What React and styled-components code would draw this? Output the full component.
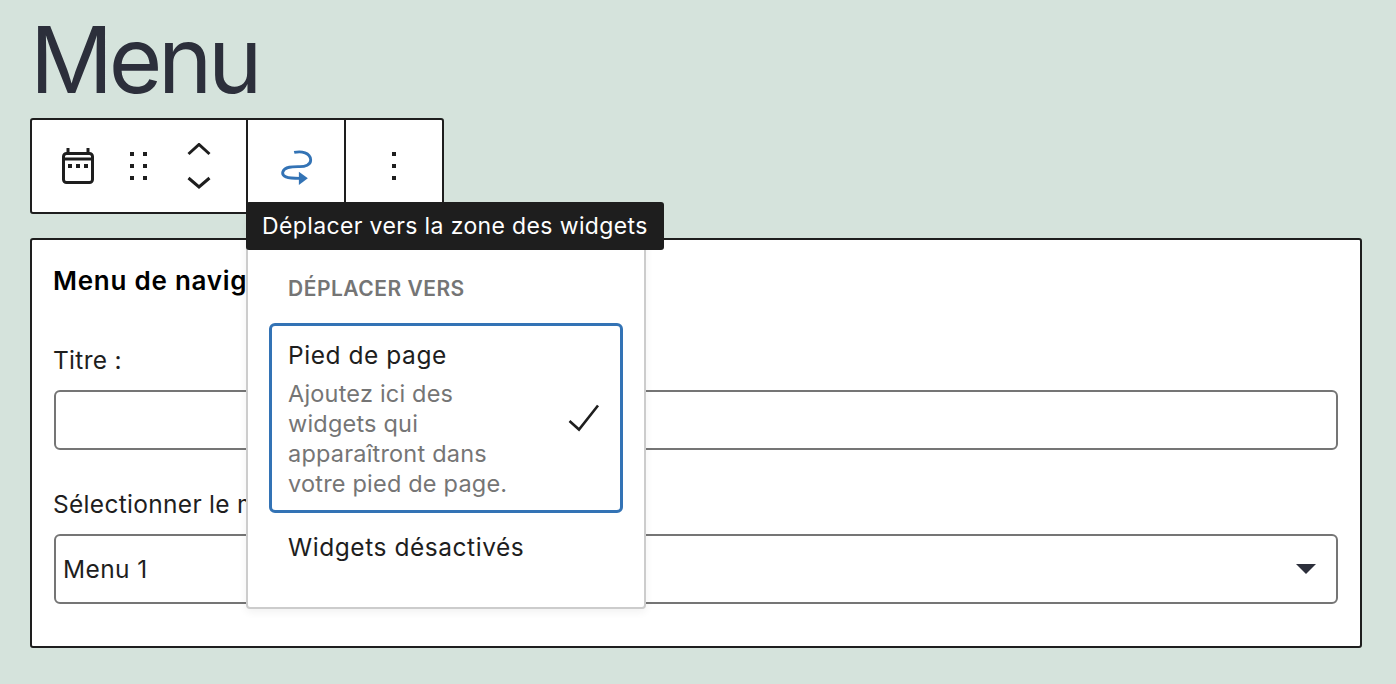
import React from 'react'
import styled, { createGlobalStyle } from 'styled-components'

const Global = createGlobalStyle`
  html, body {
    margin: 0;
    height: 100%;
    background: #d5e3dc;
  }
  body {
    font-family: Inter, "Noto Sans", sans-serif;
    color: #1e1e1e;
    overflow: hidden;
  }
`

const Page = styled.main`
  width: 1396px;
  height: 684px;
  box-sizing: border-box;
  padding: 0 34px 0 30px;
`

const Title = styled.h1`
  margin: 0;
  height: 118px;
  padding: 10px 0 0 0;
  box-sizing: border-box;
  font-size: 92px;
  line-height: 100px;
  font-weight: 400;
  letter-spacing: -4.4px;
  color: #2c2f3b;
`

//toolbar + the popover hanging from it
const ToolArea = styled.div`
  position: relative;
  z-index: 2;
`

const Toolbar = styled.div`
  display: flex;
  width: 414px;
  height: 96px;
  box-sizing: border-box;
  background: #fff;
  border: 2px solid #1e1e1e;
  border-radius: 3px;
`

const ToolGroup = styled.div`
  width: ${p => p.$width}px;
  flex: none;
  border-right: ${p => (p.$last ? 'none' : '2px solid #1e1e1e')};
  box-sizing: border-box;
  svg {
    display: block;
  }
`

const GroupInner = styled.div`
  display: flex;
  align-items: center;
  height: 100%;
  justify-content: ${p => (p.$center ? 'center' : 'flex-start')};
  padding-left: ${p => p.$pad || 0}px;
  gap: ${p => p.$gap || 0}px;
`

const MoverSlot = styled.span`
  margin-left: 4px;
`

const RedirectSlot = styled.span`
  margin: 4px 0 0 1px;
`

const Tooltip = styled.div`
  position: absolute;
  z-index: 3;
  left: 216px;
  top: 84px;
  height: 48px;
  width: 418px;
  box-sizing: border-box;
  background: #1e1e1e;
  color: #fff;
  border-radius: 3px;
  font-size: 23px;
  letter-spacing: 0.37px;
  line-height: 48px;
  padding-left: 16px;
  white-space: nowrap;
`

const Popover = styled.div`
  position: absolute;
  z-index: 2;
  left: 216px;
  top: 96px;
  width: 400px;
  height: 395px;
  box-sizing: border-box;
  background: #fff;
  border: 2px solid #cccccc;
  border-radius: 4px;
  box-shadow: 0 3px 8px rgba(0, 0, 0, 0.06);
  padding: 59px 21px 0;
`

const PopoverHeading = styled.div`
  font-size: 21px;
  line-height: 28px;
  font-weight: 600;
  letter-spacing: 0.5px;
  color: #757575;
  padding-left: 19px;
  height: 48px;
`

const Option = styled.div`
  display: flex;
  align-items: center;
  justify-content: space-between;
  box-sizing: border-box;
  width: 354px;
  border: 3px solid ${p => (p.$selected ? '#3373b5' : 'transparent')};
  border-radius: 6px;
  padding: ${p => (p.$selected ? '13px 20px 11px 16px' : '15px 16px')};
`

const OptionLabel = styled.div`
  font-size: 24.5px;
  line-height: 32px;
  color: #1e1e1e;
  letter-spacing: 0.55px;
`

const OptionHint = styled.div`
  margin-top: 8px;
  font-size: 23.5px;
  line-height: 30px;
  letter-spacing: 0.2px;
  color: #757575;
  width: 240px;
`

const Panel = styled.section`
  margin-top: 24px;
  height: 410px;
  box-sizing: border-box;
  background: #fff;
  border: 2px solid #1e1e1e;
  border-radius: 3px;
  padding: 24px 22px 0 21px;
`

const PanelTitle = styled.h2`
  margin: 0 0 47px;
  font-size: 26px;
  line-height: 34px;
  font-weight: 560;
  letter-spacing: 0.75px;
  color: #000;
`

const FieldLabel = styled.label`
  display: block;
  font-size: 24.5px;
  line-height: 30px;
  letter-spacing: 0.3px;
  color: #1e1e1e;
  margin-bottom: 15px;
`

const TextInput = styled.input`
  display: block;
  width: calc(100% - 1px);
  margin-left: 1px;
  height: 60px;
  box-sizing: border-box;
  border: 2px solid #757575;
  border-radius: 6px;
  background: #fff;
  margin-bottom: 39px;
`

const SelectBox = styled.div`
  display: flex;
  align-items: center;
  justify-content: space-between;
  height: 70px;
  margin-left: 1px;
  box-sizing: border-box;
  border: 2px solid #757575;
  border-radius: 6px;
  padding: 0 20px 0 7px;
  font-size: 24.5px;
  letter-spacing: 0.4px;
  color: #1e1e1e;
`

const Arrow = styled.span`
  width: 0;
  height: 0;
  border-left: 10px solid transparent;
  border-right: 10px solid transparent;
  border-top: 10px solid #2c2f3b;
`

const CalendarIcon = () => (
  <svg width="32" height="36" viewBox="0 0 32 36" fill="none" stroke="#1e1e1e" strokeWidth="3">
    <rect x="1.5" y="5.5" width="29" height="29" rx="3" />
    <path d="M6 0v6M26 0v6M1.5 11h29" />
    <path d="M6 18h4M14 18h4M22 18h4" strokeWidth="4" />
  </svg>
)

const DragIcon = () => (
  <svg width="17" height="28" viewBox="0 0 17 28" fill="#1e1e1e">
    <rect x="0" y="0" width="4" height="4" />
    <rect x="13" y="0" width="4" height="4" />
    <rect x="0" y="12" width="4" height="4" />
    <rect x="13" y="12" width="4" height="4" />
    <rect x="0" y="24" width="4" height="4" />
    <rect x="13" y="24" width="4" height="4" />
  </svg>
)

const MoverIcon = () => (
  <svg width="24" height="46" viewBox="0 0 24 46" fill="none" stroke="#1e1e1e" strokeWidth="3">
    <path d="M1.5 11 12 1.500 22.5 11M1.5 35 12 44 22.5 35" />
  </svg>
)

const RedirectIcon = () => (
  <svg width="32" height="36" viewBox="0 0 34 38" fill="none">
    <path
      d="M14 2.500C22 .5 31 3 31.500 10 32 16 25 17.500 20 17.500 14 17.500 4 17 2 23 .5 28 6 30 20 30"
      stroke="#3373b5"
      strokeWidth="3"
    />
    <path d="M19 23 28.500 30 19 37z" fill="#3373b5" />
  </svg>
)

const MoreIcon = () => (
  <svg width="4" height="28" viewBox="0 0 4 28" fill="#1e1e1e">
    <rect x="0" y="0" width="4" height="4" />
    <rect x="0" y="12" width="4" height="4" />
    <rect x="0" y="24" width="4" height="4" />
  </svg>
)

const CheckIcon = () => (
  <svg width="32" height="30" viewBox="0 0 32 30" fill="none" stroke="#1e1e1e" strokeWidth="2.600">
    <path d="M1.500 17 11 25.500 30 1.500" />
  </svg>
)

const App = () => (
  <Page>
    <Global />
    <Title>Menu</Title>
    <ToolArea>
      <Toolbar>
        <ToolGroup $width={216}>
          <GroupInner $pad={30} $gap={36}>
            <CalendarIcon />
            <DragIcon />
            <MoverSlot>
              <MoverIcon />
            </MoverSlot>
          </GroupInner>
        </ToolGroup>
        <ToolGroup $width={98}>
          <GroupInner $center>
            <RedirectSlot>
              <RedirectIcon />
            </RedirectSlot>
          </GroupInner>
        </ToolGroup>
        <ToolGroup $width={96} $last>
          <GroupInner $center>
            <MoreIcon />
          </GroupInner>
        </ToolGroup>
      </Toolbar>
      <Tooltip>Déplacer vers la zone des widgets</Tooltip>
      <Popover>
        <PopoverHeading>DÉPLACER VERS</PopoverHeading>
        <Option $selected>
          <div>
            <OptionLabel>Pied de page</OptionLabel>
            <OptionHint>Ajoutez ici des widgets qui apparaîtront dans votre pied de page.</OptionHint>
          </div>
          <CheckIcon />
        </Option>
        <Option>
          <OptionLabel>Widgets désactivés</OptionLabel>
        </Option>
      </Popover>
    </ToolArea>
    <Panel>
      <PanelTitle>Menu de navigation</PanelTitle>
      <FieldLabel>Titre :</FieldLabel>
      <TextInput />
      <FieldLabel>Sélectionner le menu :</FieldLabel>
      <SelectBox>
        Menu 1
        <Arrow />
      </SelectBox>
    </Panel>
  </Page>
)

export default App
